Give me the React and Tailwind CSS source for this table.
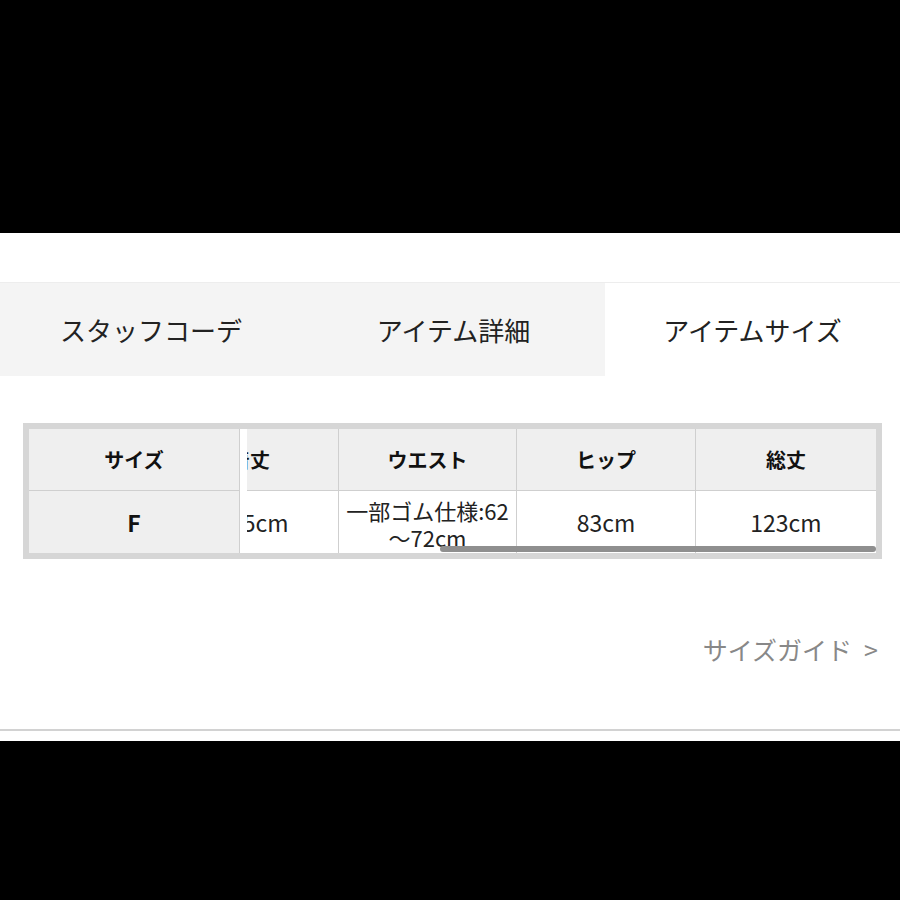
import React from "react";

const tabs = [
  { label: "スタッフコーデ", active: false },
  { label: "アイテム詳細", active: false },
  { label: "アイテムサイズ", active: true },
];

const App = () => {
  return (
    <div className="min-h-[900px] w-[900px] bg-black flex flex-col font-['Noto_Sans_CJK_JP','Noto_Sans',sans-serif]">
      {/* top black band */}
      <div className="h-[233px] shrink-0" />

      <div className="bg-white flex flex-col">
        <div className="h-[49px]" />

        {/* Tabs */}
        <div className="grid grid-cols-[302px_303px_1fr] h-[94px] border-t border-[#ededed]">
          {tabs.map((t) => (
            <div
              key={t.label}
              className={`flex items-center justify-center text-[26px] text-[#222] ${
                t.active ? "bg-white" : "bg-[#f4f4f4]"
              }`}
            >
              {t.label}
            </div>
          ))}
        </div>

        <div className="h-[47px]" />

        {/* Size table */}
        <div className="ml-[23px] w-[859px] border-[6px] border-[#d6d6d6]">
          <div className="relative grid grid-cols-[211px_7px_92px_178px_179px_180px] grid-rows-[62px_62px] text-[#222]">
            {/* header row */}
            <div className="bg-[#efefef] border-r border-b border-[#cfcfcf] flex items-center justify-center text-[20px] font-bold text-[#111]">
              サイズ
            </div>
            <div className="row-span-2 bg-white" />
            <div className="bg-[#efefef] border-r border-b border-[#cfcfcf] flex items-center overflow-hidden text-[20px] font-bold text-[#111]">
              <span className="-ml-[17px] whitespace-nowrap">着丈</span>
            </div>
            <div className="bg-[#efefef] border-r border-b border-[#cfcfcf] flex items-center justify-center text-[20px] font-bold text-[#111]">
              ウエスト
            </div>
            <div className="bg-[#efefef] border-r border-b border-[#cfcfcf] flex items-center justify-center text-[20px] font-bold text-[#111]">
              ヒップ
            </div>
            <div className="bg-[#efefef] border-b border-[#cfcfcf] flex items-center justify-center text-[20px] font-bold text-[#111]">
              総丈
            </div>

            {/* body row */}
            <div className="bg-[#efefef] border-r border-[#cfcfcf] flex items-center justify-center text-[23px] font-bold text-[#111]">
              F
            </div>
            <div className="bg-white border-r border-[#cfcfcf] flex items-center overflow-hidden text-[23px]">
              <span className="-ml-[17px] whitespace-nowrap">65cm</span>
            </div>
            <div className="bg-white border-r border-[#cfcfcf] flex items-center justify-center text-center text-[22px] leading-[27px] overflow-hidden">
              <span className="whitespace-nowrap mt-[3px]">
                一部ゴム仕様:62
                <br />
                ～72cm
              </span>
            </div>
            <div className="bg-white border-r border-[#cfcfcf] flex items-center justify-center text-[23px]">
              83cm
            </div>
            <div className="bg-white flex items-center justify-center text-[23px]">
              123cm
            </div>

            {/* overlay scrollbar */}
            <div className="absolute bottom-[1px] left-[411px] w-[436px] h-[6px] rounded-full bg-[#8f8f8f]" />
          </div>
        </div>

        {/* size guide link */}
        <div className="flex justify-end items-center gap-[12px] pr-[22px] mt-[72px] text-[25px] text-[#888]">
          <span>サイズガイド</span>
          <span>&gt;</span>
        </div>

        <div className="h-[60px]" />
        <div className="h-[2px] bg-[#d2d2d2]" />
        <div className="h-[10px]" />
      </div>

      {/* bottom black band */}
      <div className="flex-1" />
    </div>
  );
};

export default App;
